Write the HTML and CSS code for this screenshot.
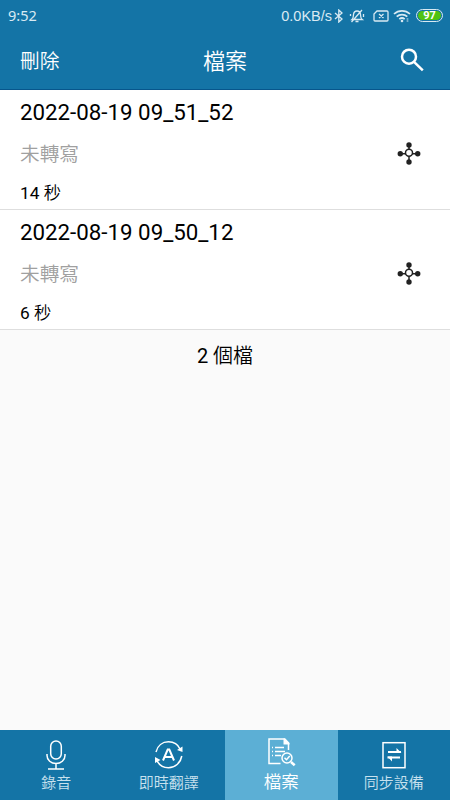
FILE: index.html
```html
<!DOCTYPE html>
<html lang="zh-Hant">
  <head>
    <meta charset="utf-8">
    <title>檔案</title>
    <link rel="stylesheet" href="styles.css">
  </head>
  <body>
    <div class="status">
      <span class="clock">9:52</span>
      <span class="speed">0.0KB/s</span>
      <svg class="bluetooth" width="10" height="14" viewBox="0 0 10 14">
        <path d="M1 4l7 6-3.2 3V1L8 4l-7 6"/>
      </svg>
      <svg class="bell" width="16" height="14" viewBox="0 0 16 14">
        <path d="M3 10.5c1.500-1.200 1.300-3 1.500-5C4.800 3 6 2 8 2s3.300 1 3.500 3.500c.2 2 0 3.800 1.700 5zM6.500 12.500h3M13 1L2.500 13M1.500 5v2M14.500 5v3"/>
      </svg>
      <svg class="sim" width="16" height="12" viewBox="0 0 16 12">
        <path d="M4 1h10q1 0 1 1v8q0 1-1 1H2q-1 0-1-1V4zM6 4l4.500 4M10.500 4L6 8"/>
      </svg>
      <svg class="wifi" width="18" height="14" viewBox="0 0 18 14">
        <path d="M1 5c4.500-4.300 11.500-4.300 16 0M3.700 7.700c3-2.900 7.600-2.900 10.600 0M6.300 10.200c1.700-1.500 3.700-1.500 5.400 0"/>
        <circle cx="9" cy="12" r="1.300"/>
        <path class="faint" d="M14.500 9v4"/>
      </svg>
      <span class="battery"><b>97</b></span>
    </div>

    <div class="header">
      <span class="delete">刪除</span>
      <h1>檔案</h1>
      <svg class="search" width="24" height="24" viewBox="0 0 24 24">
        <circle cx="9" cy="8.700" r="7"/>
        <path d="M14 13.800l8.800 8.500"/>
      </svg>
    </div>

    <div class="files">
      <div class="file">
        <div class="info">
          <h2>2022-08-19 09_51_52</h2>
          <p class="state">未轉寫</p>
          <p class="length">14 <span>秒</span></p>
        </div>
        <svg class="share" width="24" height="24" viewBox="0 0 24 24">
          <path d="M12 3v18M3 12.800h18"/>
          <circle cx="12" cy="4" r="2.700"/>
          <circle cx="12" cy="21" r="2.700"/>
          <circle cx="3.300" cy="12.800" r="2.700"/>
          <circle cx="20.700" cy="12.800" r="2.700"/>
          <circle class="hub" cx="12" cy="11.800" r="3.500"/>
        </svg>
      </div>
      <div class="file">
        <div class="info">
          <h2>2022-08-19 09_50_12</h2>
          <p class="state">未轉寫</p>
          <p class="length">6 <span>秒</span></p>
        </div>
        <svg class="share" width="24" height="24" viewBox="0 0 24 24">
          <path d="M12 3v18M3 12.800h18"/>
          <circle cx="12" cy="4" r="2.700"/>
          <circle cx="12" cy="21" r="2.700"/>
          <circle cx="3.300" cy="12.800" r="2.700"/>
          <circle cx="20.700" cy="12.800" r="2.700"/>
          <circle class="hub" cx="12" cy="11.800" r="3.500"/>
        </svg>
      </div>
      <p class="total">2 <span>個檔</span></p>
    </div>

    <div class="tabs">
      <div class="tab">
        <svg width="30" height="30" viewBox="0 0 30 30">
          <rect x="9.700" y="1" width="10.600" height="18" rx="5.300"/>
          <path d="M6 14v1.500c0 4.800 4 8 9 8s9-3.200 9-8V14M15 23.500V29M7 29h16"/>
        </svg>
        <span>錄音</span>
      </div>
      <div class="tab">
        <svg width="30" height="30" viewBox="0 0 30 30">
          <path d="M2 12C3.500 5.500 8.500 1.800 14.500 1.800c5 0 9.500 2.700 11.500 7.200M27.800 16C26.500 23 21 27.700 14.500 27.700c-5 0-9.500-2.700-11.500-7.200"/>
          <path class="solid" d="M28.500 6.500v5.500l-5.500-2zM1 23v-6l5.500 3z"/>
          <path class="letter" d="M9 20.500L13.700 9.500h1.600L20 20.500M10.800 17h7.400"/>
        </svg>
        <span>即時翻譯</span>
      </div>
      <div class="tab active">
        <svg width="30" height="30" viewBox="0 0 30 30">
          <path d="M14.500 26.500H3V2h15.500l4 4v7"/>
          <path class="solid" d="M17.500 1.500h1.800L23.500 6v1.500h-6z"/>
          <path class="lines" d="M6 10.500h1M9 10.500h9M6 14.500h1M9 14.500h10M6 18.500h1M9 18.500h6"/>
          <circle cx="21" cy="21" r="5"/>
          <path d="M18.500 20.700l2 2 3.200-3.700"/>
          <path class="handle" d="M25 25l3.700 3.300"/>
        </svg>
        <span>檔案</span>
      </div>
      <div class="tab">
        <svg width="30" height="30" viewBox="0 0 30 30">
          <rect x="4" y="2.700" width="22" height="25"/>
          <path class="swap" d="M9 12h13M8.500 17.500H21"/>
          <path class="solid" d="M17.500 8l5 5h-5zM8.500 16.500H13v5z"/>
        </svg>
        <span>同步設備</span>
      </div>
    </div>
  </body>
</html>
```

FILE: styles.css
```css
body {
  margin: 0;
  height: 800px;
  display: flex;
  flex-direction: column;
  background-color: #fafafa;
  color: #000;
  font-family: Roboto, "Noto Sans CJK TC", sans-serif;
}

h1, h2, p {
  margin: 0;
  font-weight: 400;
}

svg {
  display: block;
  flex: none;
  fill: none;
  stroke: white;
}

.status {
  display: flex;
  align-items: center;
  height: 30px;
  box-sizing: border-box;
  padding: 1px 7px 0 8px;
  background-color: #1474a6;
  color: #d9eaf3;
}
.status svg {
  stroke: #d9eaf3;
  stroke-width: 1.300;
}
.clock {
  flex: 1;
  padding-bottom: 1px;
  font-family: "Noto Sans", sans-serif;
  font-size: 14.500px;
}
.speed {
  font-family: "Liberation Sans", sans-serif;
  font-size: 14.500px;
  margin-right: 2px;
}
.bell {
  margin-left: 5px;
}
.sim {
  margin-left: 8px;
}
.wifi {
  margin-left: 4px;
}
.wifi path {
  stroke-width: 1.700;
}
.wifi circle {
  fill: #d9eaf3;
  stroke: none;
}
.wifi .faint {
  stroke: #74acca;
}
.battery {
  box-sizing: border-box;
  width: 27px;
  height: 13px;
  margin-top: -1px;
  margin-left: 5px;
  padding: 1px;
  border: 1px solid #d9eaf3;
  border-radius: 7px;
}
.battery b {
  display: block;
  height: 9px;
  border-radius: 5px;
  background-color: #50c312;
  color: white;
  font-size: 11px;
  line-height: 10px;
  text-align: center;
}

.header {
  display: grid;
  grid-template-columns: 1fr auto 1fr;
  align-items: center;
  height: 60px;
  box-sizing: border-box;
  padding: 0 26px 0 20px;
  border-bottom: 1px solid #07568c;
  background-color: #1474a6;
  color: white;
}
.delete {
  font-size: 19.700px;
  font-weight: 350;
  line-height: 30px;
  padding-top: 4px;
}
.header h1 {
  font-size: 22px;
  font-weight: 350;
  margin-left: 6px;
  padding-bottom: 1px;
}
.search {
  justify-self: end;
  stroke-width: 2.500;
}

.files {
  flex: 1;
}
.file {
  display: flex;
  justify-content: space-between;
  height: 120px;
  box-sizing: border-box;
  padding: 0 29px 0 20px;
  border-bottom: 1px solid #dedede;
  background-color: white;
}
.file h2 {
  font-size: 22.300px;
  line-height: 44px;
}
.state {
  color: #a0a0a0;
  font-size: 19.700px;
  font-weight: 350;
  line-height: 42px;
}
.length {
  font-size: 17.300px;
  line-height: 34px;
}
.length span, .total span {
  font-weight: 350;
}
.share {
  margin-top: 51px;
  stroke: #222;
  stroke-width: 1.500;
  fill: #222;
}
.share circle {
  stroke: none;
}
.share .hub {
  fill: white;
  stroke: #222;
}
.total {
  font-size: 20px;
  line-height: 52px;
  text-align: center;
}

.tabs {
  display: grid;
  grid-template-columns: repeat(4, 1fr);
  height: 70px;
}
.tab {
  display: flex;
  flex-direction: column;
  align-items: center;
  box-sizing: border-box;
  padding-top: 10px;
  background-color: #1474a6;
  color: #c8e1ee;
  font-size: 15px;
  font-weight: 350;
}
.tab svg {
  stroke-width: 1.500;
}
.tab span {
  line-height: 26px;
}
.tab .solid {
  fill: white;
  stroke: none;
}
.tab .letter, .tab .swap {
  stroke-width: 2;
}
.tab .lines {
  stroke-width: 1.300;
}
.tab .handle {
  stroke-width: 2.500;
}
.active {
  padding-top: 7px;
  background-color: #5cafd5;
  color: white;
  font-size: 17.500px;
}
.active span {
  line-height: 30px;
}
```
